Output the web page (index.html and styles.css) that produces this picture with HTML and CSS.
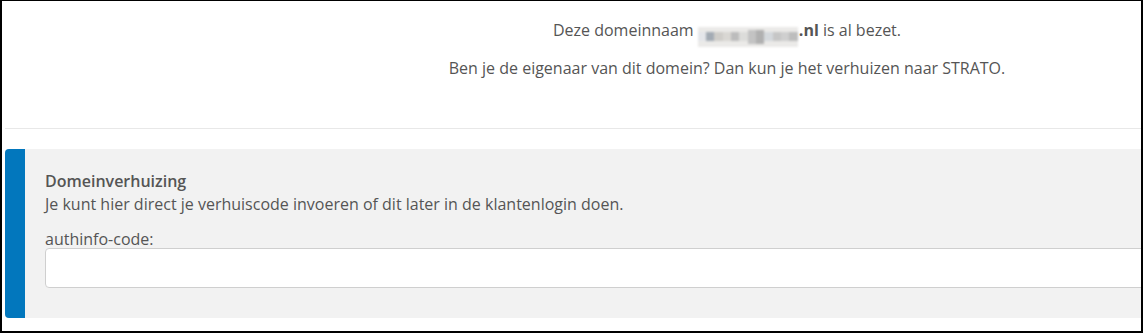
FILE: index.html
```html
<!DOCTYPE html>
<html lang="nl">
<head>
<meta charset="utf-8">
<title>Domeinverhuizing</title>
<link rel="stylesheet" href="styles.css">
</head>
<body>
<div class="frame">
  <div class="inner">
    <section class="notice">
      <div class="notice-col">
        <p>Deze domeinnaam <span class="blur" aria-hidden="true"><i></i><i></i><i></i><i></i><i></i><i></i><i></i><i></i><i></i><i></i><i></i><i></i></span><strong>.nl</strong> is al bezet.</p>
        <p>Ben je de eigenaar van dit domein? Dan kun je het verhuizen naar STRATO.</p>
      </div>
    </section>
    <section class="panel">
      <div class="panel-bar"></div>
      <div class="panel-body">
        <div class="panel-title">Domeinverhuizing</div>
        <div class="panel-desc">Je kunt hier direct je verhuiscode invoeren of dit later in de klantenlogin doen.</div>
        <label class="field-label" for="auth">authinfo-code:</label>
        <input class="field-input" id="auth" type="text">
      </div>
    </section>
  </div>
</div>
</body>
</html>
```

FILE: styles.css
```css
html, body {
  margin: 0;
  padding: 0;
  background: #fff;
}

.frame {
  box-sizing: border-box;
  width: 1143px;
  height: 333px;
  border-style: solid;
  border-color: #000;
  border-width: 1px 2px 2px 2px;
  overflow: hidden;
  font-family: "Open Sans", "Liberation Sans", sans-serif;
  font-size: 16px;
  line-height: 22px;
  color: #555;
}

.inner {
  padding-left: 3px;
  width: 1190px;
}

.notice {
  height: 127px;
  border-bottom: 1px solid #e8e8e8;
  display: flex;
  width: 1136px;
}

.notice-col {
  margin-left: 308px;
  width: 835px;
  padding-top: 18px;
  text-align: center;
}

.notice-col p {
  margin: 0 0 10px;
}

.notice-col strong {
  font-weight: 700;
}

.blur {
  display: inline-flex;
  align-items: center;
  width: 100px;
  height: 20px;
  vertical-align: -5px;
  background: #ebeae8;
  filter: blur(1.2px);
  margin-right: 1px;
}

.blur i {
  flex: 1;
  height: 9px;
  background: #c4c4c4;
}
.blur i:nth-child(1) { background: #e4e6ea; }
.blur i:nth-child(2) { background: #a3abb4; }
.blur i:nth-child(3) { background: #cfcdc9; }
.blur i:nth-child(4) { background: #d9d7d3; }
.blur i:nth-child(5) { background: #bcbcbc; }
.blur i:nth-child(6) { background: #dcdcda; }
.blur i:nth-child(7) { background: #c3c3c3; height: 14px; }
.blur i:nth-child(8) { background: #b0b0b0; height: 14px; }
.blur i:nth-child(9) { background: #d4d8dc; }
.blur i:nth-child(10) { background: #c6c6c6; }
.blur i:nth-child(11) { background: #cfcfcf; }
.blur i:nth-child(12) { background: #bdbdbd; }

.panel {
  margin-top: 20px;
  display: flex;
  height: 169px;
  background: #f2f2f2;
  border-radius: 4px 0 0 4px;
  overflow: hidden;
}

.panel-bar {
  width: 20px;
  flex: none;
  background: #0277bd;
}

.panel-body {
  flex: 1;
  padding: 21px 0 0 20px;
  display: flex;
  flex-direction: column;
}

.panel-title {
  font-weight: 600;
}

.panel-desc {
  margin-top: 1px;
}

.field-label {
  margin-top: 15px;
  line-height: 18px;
  display: block;
}

.field-input {
  margin-top: 0;
  box-sizing: border-box;
  height: 40px;
  width: 100%;
  border: 1px solid #cfcfcf;
  border-radius: 4px;
  background: #fff;
  font: inherit;
  padding: 0 10px;
}
```
